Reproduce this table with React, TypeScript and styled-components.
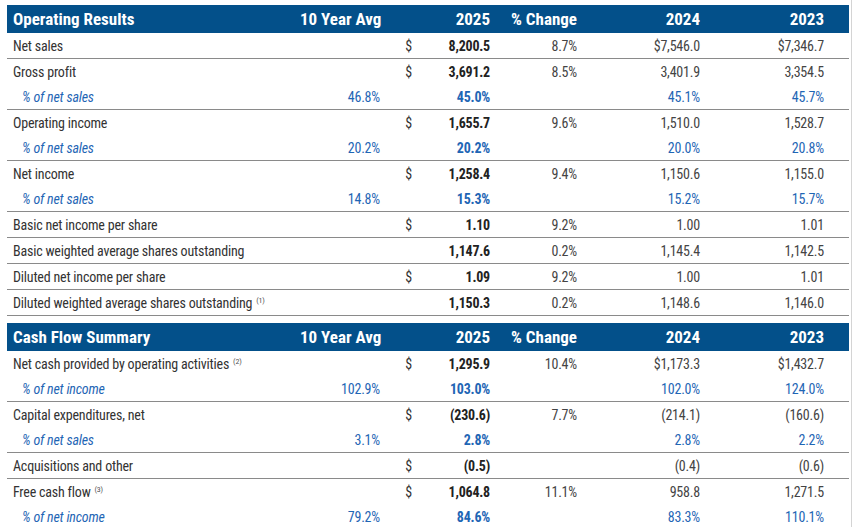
import React from "react";
import styled, { createGlobalStyle } from "styled-components";

const GlobalStyle = createGlobalStyle`
  body {
    margin: 0;
    background: #fff;
    font-family: "Roboto", "Liberation Sans", sans-serif;
    font-stretch: 75%;
  }
`;

type Row = {
  label: string;
  note?: string;
  pct?: boolean;
  avg?: string;
  dollar?: boolean;
  y2025?: string;
  change?: string;
  y2024?: string;
  y2023?: string;
};

type Group = Row[];

const operating: Group[] = [
  [{ label: "Net sales", dollar: true, y2025: "8,200.5", change: "8.7%", y2024: "$7,546.0", y2023: "$7,346.7" }],
  [
    { label: "Gross profit", dollar: true, y2025: "3,691.2", change: "8.5%", y2024: "3,401.9", y2023: "3,354.5" },
    { label: "% of net sales", pct: true, avg: "46.8%", y2025: "45.0%", y2024: "45.1%", y2023: "45.7%" },
  ],
  [
    { label: "Operating income", dollar: true, y2025: "1,655.7", change: "9.6%", y2024: "1,510.0", y2023: "1,528.7" },
    { label: "% of net sales", pct: true, avg: "20.2%", y2025: "20.2%", y2024: "20.0%", y2023: "20.8%" },
  ],
  [
    { label: "Net income", dollar: true, y2025: "1,258.4", change: "9.4%", y2024: "1,150.6", y2023: "1,155.0" },
    { label: "% of net sales", pct: true, avg: "14.8%", y2025: "15.3%", y2024: "15.2%", y2023: "15.7%" },
  ],
  [{ label: "Basic net income per share", dollar: true, y2025: "1.10", change: "9.2%", y2024: "1.00", y2023: "1.01" }],
  [{ label: "Basic weighted average shares outstanding", y2025: "1,147.6", change: "0.2%", y2024: "1,145.4", y2023: "1,142.5" }],
  [{ label: "Diluted net income per share", dollar: true, y2025: "1.09", change: "9.2%", y2024: "1.00", y2023: "1.01" }],
  [{ label: "Diluted weighted average shares outstanding", note: "(1)", y2025: "1,150.3", change: "0.2%", y2024: "1,148.6", y2023: "1,146.0" }],
];

const cashFlow: Group[] = [
  [
    { label: "Net cash provided by operating activities", note: "(2)", dollar: true, y2025: "1,295.9", change: "10.4%", y2024: "$1,173.3", y2023: "$1,432.7" },
    { label: "% of net income", pct: true, avg: "102.9%", y2025: "103.0%", y2024: "102.0%", y2023: "124.0%" },
  ],
  [
    { label: "Capital expenditures, net", dollar: true, y2025: "(230.6)", change: "7.7%", y2024: "(214.1)", y2023: "(160.6)" },
    { label: "% of net sales", pct: true, avg: "3.1%", y2025: "2.8%", y2024: "2.8%", y2023: "2.2%" },
  ],
  [{ label: "Acquisitions and other", dollar: true, y2025: "(0.5)", y2024: "(0.4)", y2023: "(0.6)" }],
  [
    { label: "Free cash flow", note: "(3)", dollar: true, y2025: "1,064.8", change: "11.1%", y2024: "958.8", y2023: "1,271.5" },
    { label: "% of net income", pct: true, avg: "79.2%", y2025: "84.6%", y2024: "83.3%", y2023: "110.1%" },
  ],
];

const Frame = styled.div`
  box-sizing: border-box;
  width: 852px;
  height: 527px;
  border-right: 1px solid #d4d4d4;
  overflow: hidden;
`;

const Page = styled.div`
  padding: 5px 0 0 7px;
  width: 842px;
`;

const Section = styled.section<{ $gap?: boolean }>`
  margin-top: ${(p) => (p.$gap ? "7px" : "0")};
`;

const columns = "1fr 80px 35px 75px 87px 123px 124px";

const Header = styled.div`
  display: grid;
  grid-template-columns: ${columns};
  align-items: center;
  height: 28px;
  padding: 0 25px 0 6px;
  background: #03508a;
  color: #fff;
  font-weight: bold;
  font-size: 17px;
`;

const HeadCell = styled.div<{ $left?: boolean }>`
  text-align: ${(p) => (p.$left ? "left" : "right")};
  white-space: nowrap;
`;

const GroupBox = styled.div`
  border-bottom: 1px solid #8a8a8a;
`;

const RowLine = styled.div`
  display: grid;
  grid-template-columns: ${columns};
  align-items: center;
  box-sizing: border-box;
  height: 25px;
  padding: 1px 25px 0 6px;
  font-size: 14px;
  letter-spacing: -0.2px;
  color: #333;
`;

const Label = styled.div<{ $pct?: boolean }>`
  white-space: nowrap;
  padding-left: ${(p) => (p.$pct ? "9px" : "0")};
  font-style: ${(p) => (p.$pct ? "italic" : "normal")};
  color: ${(p) => (p.$pct ? "#1f66b5" : "#333")};
`;

const Note = styled.sup`
  font-size: 8px;
  color: #555;
  margin-left: 4px;
  vertical-align: 5px;
`;

const Num = styled.div<{ $pct?: boolean; $bold?: boolean }>`
  text-align: right;
  white-space: nowrap;
  font-weight: ${(p) => (p.$bold ? "bold" : "normal")};
  color: ${(p) => (p.$pct ? "#1f66b5" : p.$bold ? "#222" : "#444")};
`;

const Dollar = styled.div`
  text-align: right;
  padding-right: 3px;
  color: #333;
`;

function Table({ title, groups, gap }: { title: string; groups: Group[]; gap?: boolean }) {
  return (
    <Section $gap={gap}>
      <Header>
        <HeadCell $left>{title}</HeadCell>
        <HeadCell>10 Year Avg</HeadCell>
        <HeadCell />
        <HeadCell>2025</HeadCell>
        <HeadCell>% Change</HeadCell>
        <HeadCell>2024</HeadCell>
        <HeadCell>2023</HeadCell>
      </Header>
      {groups.map((g, gi) => (
        <GroupBox key={gi}>
          {g.map((r, ri) => (
            <RowLine key={ri}>
              <Label $pct={r.pct}>
                {r.label}
                {r.note && <Note>{r.note}</Note>}
              </Label>
              <Num $pct={r.pct}>{r.avg}</Num>
              <Dollar>{r.dollar ? "$" : ""}</Dollar>
              <Num $pct={r.pct} $bold>{r.y2025}</Num>
              <Num>{r.change}</Num>
              <Num $pct={r.pct}>{r.y2024}</Num>
              <Num $pct={r.pct}>{r.y2023}</Num>
            </RowLine>
          ))}
        </GroupBox>
      ))}
    </Section>
  );
}

export default function App() {
  return (
    <>
      <GlobalStyle />
      <Frame>
        <Page>
          <Table title="Operating Results" groups={operating} />
          <Table title="Cash Flow Summary" groups={cashFlow} gap />
        </Page>
      </Frame>
    </>
  );
}
